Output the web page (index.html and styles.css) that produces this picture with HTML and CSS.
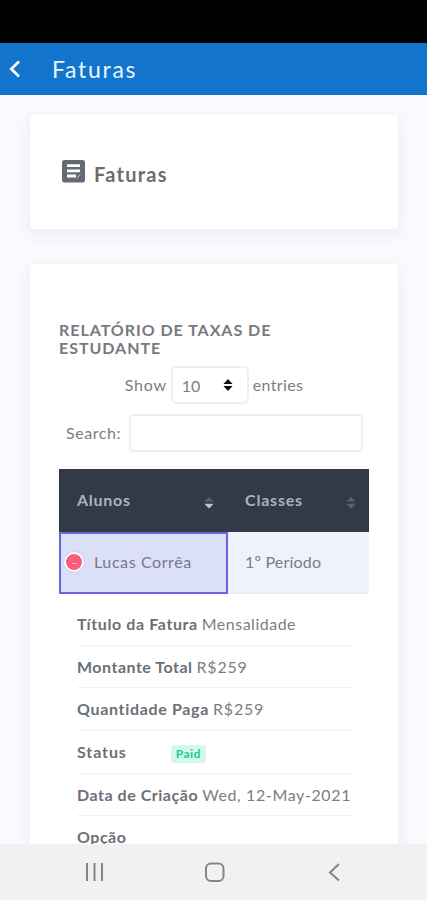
FILE: index.html
```html
<!DOCTYPE html>
<html lang="pt-BR">
<head>
<meta charset="utf-8">
<meta name="viewport" content="width=device-width, initial-scale=1">
<title>Faturas</title>
<link rel="stylesheet" href="styles.css">
</head>
<body>
<div class="phone">
  <div class="statusbar"></div>
  <header class="appbar">
    <svg class="back" width="12" height="18" viewBox="0 0 12 18"><path d="M10 1.5 2.3 9l7.7 7.5"/></svg>
    <h1 class="t-app">Faturas</h1>
  </header>
  <main class="content">
    <section class="card card-title">
      <svg class="doc" width="23" height="23" viewBox="0 0 23 23"><rect width="23" height="22.5" rx="2.5"/><path d="M5 5.6h13M5 10.8h13M5 16h9"/><path class="fold" d="M14.5 18.5 18.5 14.5"/></svg>
      <h2 class="t-page">Faturas</h2>
    </section>
    <section class="card card-report">
      <h3 class="report-title">RELATÓRIO DE TAXAS DE<br>ESTUDANTE</h3>
      <div class="length">
        <span class="t-show">Show</span>
        <div class="select"><span class="t-ten">10</span><svg width="10" height="12" viewBox="0 0 10 12"><path d="M5 0 9.6 5H.4zM5 12 .4 7h9.2z"/></svg></div>
        <span class="t-entries">entries</span>
      </div>
      <label class="search"><span class="t-search">Search:</span><input type="text"></label>
      <div class="table">
        <div class="th"><span class="t-alunos">Alunos</span><svg width="10" height="12" viewBox="0 0 10 12"><path class="dim" d="M5 0 9.5 4.6H.5z"/><path class="lit" d="M5 11.5.3 6.7h9.4z"/></svg></div>
        <div class="th"><span class="t-classes">Classes</span><svg width="10" height="12" viewBox="0 0 10 12"><path class="dim" d="M5 0 9.5 4.6H.5zM5 11.5.3 6.7h9.4z"/></svg></div>
        <div class="td selected"><i class="toggle"><b></b></i><span class="t-lucas">Lucas Corrêa</span></div>
        <div class="td"><span class="t-periodo">1º Período</span></div>
      </div>
      <ul class="details">
        <li><b class="t-k1">Título da Fatura</b><span class="t-v1">Mensalidade</span></li>
        <li><b class="t-k2">Montante Total</b><span class="t-v2">R$259</span></li>
        <li><b class="t-k3">Quantidade Paga</b><span class="t-v2">R$259</span></li>
        <li><b class="t-k4">Status</b><span class="badge">Paid</span></li>
        <li><b class="t-k5">Data de Criação</b><span class="t-v5">Wed, 12-May-2021</span></li>
        <li><b class="t-k6">Opção</b></li>
      </ul>
    </section>
  </main>
  <nav class="navbar">
    <svg width="20" height="20" viewBox="0 0 20 20"><path d="M2 1v18M9.5 1v18M17 1v18"/></svg>
    <svg width="20" height="20" viewBox="0 0 20 20"><rect x="1" y="1.5" width="17.5" height="17.5" rx="5"/></svg>
    <svg width="20" height="20" viewBox="0 0 20 20"><path d="M14 2 5 10.5l9 8"/></svg>
  </nav>
</div>
</body>
</html>
```
FILE: styles.css
```css
* { box-sizing: border-box; }
body { margin: 0; font: 16px/20px Lato, "Open Sans", sans-serif; color: #7b7d82; }
h1, h2, h3, ul { margin: 0; padding: 0; list-style: none; }
span, b { white-space: nowrap; }
svg { display: block; flex: none; }
.phone { height: 900px; display: flex; flex-direction: column; overflow: hidden; background: #fafbfe; }
.statusbar { height: 43px; flex: none; background: #000; }
.appbar { height: 52px; flex: none; display: flex; align-items: center; padding-left: 9px; gap: 31px; background: #1274cc; border-bottom: 1px solid #0d6fd0; }
.back { fill: none; stroke: #fff; stroke-width: 2.7; }
.t-app { font: 400 23px/30px Lato, sans-serif; color: #e9f4ff; letter-spacing: 1.7px; }
.content { flex: 1; min-height: 0; overflow: hidden; padding: 20px 29px 0 30px; }
.card { background: #fff; border-radius: 4px; box-shadow: 0 5px 14px 5px rgba(70, 90, 130, .06); }
.card-title { height: 114px; display: flex; padding: 45px 0 0 32px; gap: 9px; }
.doc rect { fill: #666a70; }
.doc path { stroke: #fff; stroke-width: 2.8; }
.doc .fold { stroke: #fff; stroke-width: 1; opacity: .6; }
.t-page { font: 700 20px/29px Lato, sans-serif; color: #6b6d70; letter-spacing: 1.25px; }
.card-report { margin-top: 35px; height: 640px; padding: 57px 29px 0; }
.report-title { font: 700 16px/18px Lato, sans-serif; color: #777a7e; letter-spacing: .97px; white-space: nowrap; }
.length { display: flex; align-items: center; justify-content: center; gap: 4px; height: 38px; margin-top: 9px; }
.t-show { letter-spacing: .75px; }
.t-ten { position: relative; top: 1px; }
.t-entries { letter-spacing: .35px; }
.t-search { letter-spacing: .55px; }
.select { width: 78px; height: 38px; border: 2px solid #f0f0f1; border-radius: 5px; display: flex; align-items: center; justify-content: space-between; padding: 0 14px 0 9px; }
.select path { fill: #111; }
.search { display: flex; align-items: center; height: 38px; margin: 10px 0 0 7px; gap: 8px; }
.search input { width: 234px; height: 38px; border: 2px solid #f0f0f1; border-radius: 4px; background: #fff; padding: 0 8px; }
.table { display: grid; grid-template-columns: 169px 141px; grid-template-rows: 63px 62px; margin-top: 17px; }
.th { background: #313a46; color: #aab3bd; font-weight: 700; display: flex; justify-content: space-between; align-items: center; padding: 0 14px 2px 18px; }
.th + .th { padding: 0 13px 2px 17px; }
.th svg { margin-top: 6px; }
.t-alunos { letter-spacing: .75px; }
.t-classes { letter-spacing: .8px; }
.dim { fill: #59626d; }
.lit { fill: #bcc3ca; }
.td { background: #eff2fb; display: flex; align-items: center; padding: 0 0 1px 17px; border-bottom: 1px solid #e8ebf2; }
.td.selected { background: #dce0f7; border: 2px solid #6965df; padding: 0 0 2px 3px; gap: 10px; color: #747791; }
.t-lucas { letter-spacing: .6px; }
.t-periodo { letter-spacing: .2px; }
.toggle { width: 20px; height: 20px; border: 2px solid #fff; border-radius: 50%; background: #fa5c7c; box-shadow: 0 0 2px rgba(80, 80, 120, .35); display: flex; align-items: center; justify-content: center; }
.toggle b { width: 5px; height: 1px; margin-top: 2px; background: #ffb0bf; }
.details { width: 275px; margin: 9px 0 0 18px; }
.details li { height: 42.7px; display: flex; align-items: center; border-bottom: 1px solid #f0f1f2; gap: 4px; }
.details b { color: #6c7076; letter-spacing: .6px; }
.details .t-k2 { letter-spacing: .5px; }
.details .t-k3 { letter-spacing: .67px; }
.details .t-k4 { letter-spacing: .9px; }
.details .t-k5 { letter-spacing: .53px; }
.details .t-k6 { letter-spacing: .5px; }
.t-v1 { letter-spacing: .5px; }
.t-v2 { letter-spacing: .8px; }
.t-v5 { letter-spacing: .62px; }
.badge { margin-left: 40px; margin-top: 4px; width: 35px; height: 18px; border-radius: 3px; background: #d3f8eb; color: #1acb93; font: 700 12px/18px Lato, sans-serif; text-align: center; letter-spacing: .5px; }
.navbar { height: 56px; flex: none; background: #f1f1f1; display: flex; align-items: center; padding-left: 85px; gap: 100px; }
.navbar svg { fill: none; stroke: #858585; stroke-width: 2; }
```
